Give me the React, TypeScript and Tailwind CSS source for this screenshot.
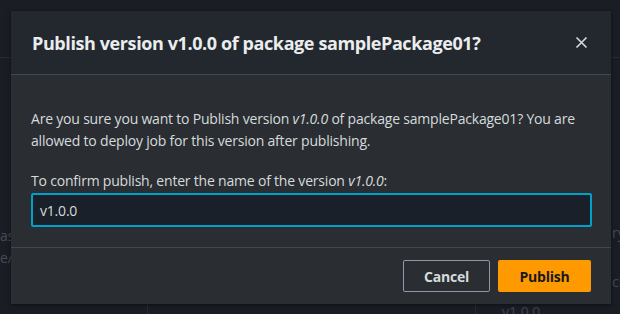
import React from "react";

export default function App() {
  const font = { fontFamily: '"Open Sans", "Noto Sans", sans-serif' };
  return (
    <div
      className="relative w-[620px] h-[314px] overflow-hidden bg-[#1a1d24] p-[11px]"
      style={font}
    >
      {/* faint background page */}
      <div className="absolute left-0 right-0 top-[57px] h-px bg-[#272b33]" />
      <div className="absolute left-0 top-[226px] text-[14px] leading-[20px] text-[#454b55]">as</div>
      <div className="absolute left-0 top-[248px] text-[14px] leading-[20px] text-[#454b55]">e/s</div>
      <div className="absolute left-[612px] top-[223px] text-[14px] leading-[20px] text-[#454b55]">ry</div>
      <div className="absolute left-[612px] top-[272px] text-[14px] leading-[20px] text-[#454b55]">ck</div>
      <div className="absolute left-[147px] top-[300px] bottom-0 w-px bg-[#272b33]" />
      <div className="absolute left-[475px] top-[300px] bottom-0 w-px bg-[#272b33]" />
      <div className="absolute left-[502px] top-[302px] text-[14px] leading-[20px] text-[#3f454e]">v1.0.0</div>

      <div className="relative w-[600px] h-[293px] flex flex-col bg-[#2a2e33] shadow-[0_1px_4px_rgba(0,0,0,0.5)]">
        <div className="h-[64px] flex items-center justify-between pl-[21px] pr-[23px] bg-[#23272e] border-b border-[#414750]">
          <h2 className="text-[18px] leading-[22px] font-bold tracking-[-0.4px] text-[#eaeded]">
            Publish version v1.0.0 of package samplePackage01?
          </h2>
          <svg width="13" height="13" viewBox="0 0 13 13" className="text-[#d5dbdb]">
            <path d="M1.5 1.5 L11.5 11.5 M11.5 1.5 L1.5 11.5" stroke="currentColor" strokeWidth="1.6" fill="none" />
          </svg>
        </div>
        <div className="flex-1 flex flex-col pt-[33px] px-[20px] border-b border-[#414750]">
          <p className="text-[14px] leading-[22px] tracking-[-0.2px] text-[#d5dbdb]">
            Are you sure you want to Publish version <i>v1.0.0</i> of package samplePackage01? You are allowed to deploy job for this version after publishing.
          </p>
          <label className="mt-[18px] text-[14px] leading-[22px] tracking-[-0.2px] text-[#d5dbdb]">
            To confirm publish, enter the name of the version <i>v1.0.0</i>:
          </label>
          <div className="mt-[1px] h-[34px] w-[561px] flex items-center border-2 border-[#00a1c9] rounded-[2px] bg-[#1a2029] pl-[7px] text-[14px] tracking-[-0.2px] text-[#d5dbdb]">
            v1.0.0
          </div>
        </div>
        <div className="h-[56px] flex items-center justify-end gap-[8px] pr-[20px]">
          <button className="h-[32px] w-[87px] border border-[#8d99a8] rounded-[2px] text-[14px] font-bold tracking-[-0.2px] text-[#d5dbdb]">
            Cancel
          </button>
          <button className="h-[32px] w-[93px] bg-[#ff9900] rounded-[2px] text-[14px] font-bold tracking-[-0.2px] text-[#16191f]">
            Publish
          </button>
        </div>
      </div>
    </div>
  );
}
